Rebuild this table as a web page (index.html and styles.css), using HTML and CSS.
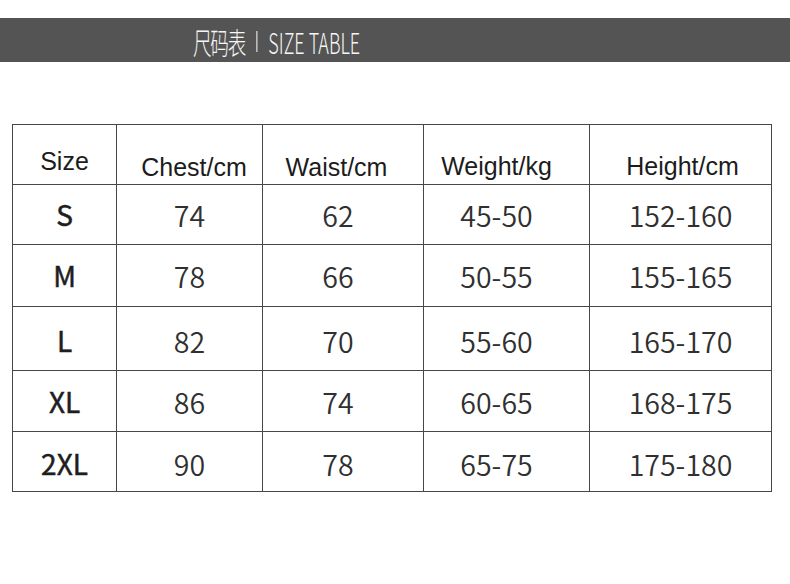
FILE: index.html
```html
<!DOCTYPE html>
<html lang="zh-CN">
<head>
<meta charset="utf-8">
<title>尺码表 | SIZE TABLE</title>
<link rel="stylesheet" href="styles.css">
</head>
<body>
<header class="banner">
  <div class="banner-title">
    <span class="title-cn">尺码表</span>
    <span class="title-sep"></span>
    <span class="title-en">SIZE TABLE</span>
  </div>
</header>
<main class="size-table">
  <div class="cell head head-size">Size</div>
  <div class="cell head head-chest">Chest/cm</div>
  <div class="cell head head-waist">Waist/cm</div>
  <div class="cell head head-weight">Weight/kg</div>
  <div class="cell head head-height">Height/cm</div>

  <div class="cell label">S</div>
  <div class="cell num">74</div>
  <div class="cell num col-waist">62</div>
  <div class="cell num col-weight">45-50</div>
  <div class="cell num">152-160</div>

  <div class="cell label">M</div>
  <div class="cell num">78</div>
  <div class="cell num col-waist">66</div>
  <div class="cell num col-weight">50-55</div>
  <div class="cell num">155-165</div>

  <div class="cell label low">L</div>
  <div class="cell num low">82</div>
  <div class="cell num col-waist low">70</div>
  <div class="cell num col-weight low">55-60</div>
  <div class="cell num low">165-170</div>

  <div class="cell label">XL</div>
  <div class="cell num">86</div>
  <div class="cell num col-waist">74</div>
  <div class="cell num col-weight">60-65</div>
  <div class="cell num">168-175</div>

  <div class="cell label low">2XL</div>
  <div class="cell num low">90</div>
  <div class="cell num col-waist low">78</div>
  <div class="cell num col-weight low">65-75</div>
  <div class="cell num low">175-180</div>
</main>
</body>
</html>
```

FILE: styles.css
```css
html, body {
  margin: 0;
  padding: 0;
  background: #ffffff;
}

body {
  width: 790px;
  height: 584px;
  overflow: hidden;
}

.banner {
  margin-top: 18px;
  height: 44px;
  background: #545454;
  display: flex;
  align-items: center;
  padding-left: 193px;
  padding-top: 2px;
  box-sizing: border-box;
}

.banner-title {
  display: flex;
  align-items: center;
  gap: 18px;
  transform: scaleX(0.62);
  transform-origin: left center;
  color: #f6f6f6;
  font-family: "Noto Sans CJK SC", "Noto Sans", sans-serif;
  font-weight: 300;
  white-space: nowrap;
}

.title-cn {
  font-size: 30px;
  line-height: 30px;
  letter-spacing: -2px;
}

.title-en {
  font-size: 29px;
  line-height: 30px;
}

.title-sep {
  width: 1.5px;
  height: 21px;
  background: #d8d8d8;
}

.size-table {
  display: grid;
  grid-template-columns: 103px 145px 160px 165px 181px;
  grid-template-rows: 59px 59px 61px 63px 60px 59px;
  gap: 1px;
  width: max-content;
  background: #474747;
  border: 1px solid #474747;
  margin-top: 62px;
  margin-left: 12px;
}

.cell {
  background: #ffffff;
  display: flex;
  align-items: center;
  justify-content: center;
  box-sizing: border-box;
}

.head {
  align-items: flex-end;
  font-family: "Liberation Sans", Arial, sans-serif;
  font-size: 25px;
  line-height: 25px;
  color: #1c1c1c;
  padding-bottom: 4px;
}

.head-size {
  padding-bottom: 10px;
}

.head-chest {
  padding-left: 9px;
}

.head-waist {
  padding-right: 13px;
}

.head-weight {
  padding-right: 20px;
  padding-bottom: 5px;
}

.head-height {
  padding-left: 4px;
  padding-bottom: 5px;
}

.num {
  font-family: "Noto Sans CJK SC", "Noto Sans", sans-serif;
  font-size: 28.5px;
  line-height: 29px;
  font-weight: 350;
  color: #303030;
}

.label {
  font-family: "Noto Sans CJK SC", "Noto Sans", sans-serif;
  font-size: 28px;
  line-height: 29px;
  font-weight: 400;
  color: #1e1e1e;
  -webkit-text-stroke: 0.5px #1e1e1e;
}

.low {
  padding-top: 4px;
}

.col-waist {
  padding-right: 10px;
}

.col-weight {
  padding-right: 20px;
}
```
